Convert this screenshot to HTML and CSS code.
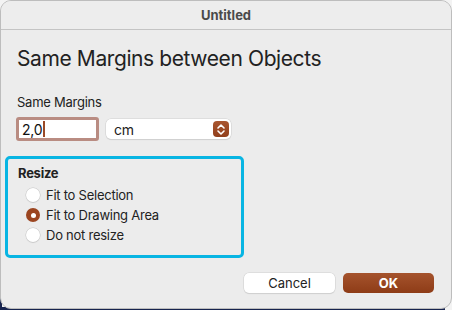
FILE: index.html
```html
<!DOCTYPE html>
<html>
<head>
<meta charset="utf-8">
<link rel="stylesheet" href="styles.css">
</head>
<body>
<div class="window">
  <div class="titlebar">Untitled</div>
  <div class="content">
    <h1 class="heading">Same Margins between Objects</h1>
    <div class="label">Same Margins</div>
    <div class="row">
      <div class="input"><span class="val">2,0</span><span class="caret"></span></div>
      <div class="select">
        <span>cm</span>
        <span class="stepper">
          <svg width="10" height="13" viewBox="0 0 10 13"><path d="M2 5 L5 2 L8 5 M2 8 L5 11 L8 8" fill="none" stroke="#fff" stroke-width="1.6" stroke-linecap="round" stroke-linejoin="round"/></svg>
        </span>
      </div>
    </div>
    <div class="group">
      <div class="group-title">Resize</div>
      <label class="radio"><span class="dot"></span>Fit to Selection</label>
      <label class="radio"><span class="dot on"></span>Fit to Drawing Area</label>
      <label class="radio"><span class="dot"></span>Do not resize</label>
    </div>
    <div class="buttons">
      <button class="btn">Cancel</button>
      <button class="btn primary">OK</button>
    </div>
  </div>
</div>
</body>
</html>
```
FILE: styles.css
```css
html, body { margin: 0; padding: 0; }
body {
  width: 452px; height: 310px; overflow: hidden;
  font-family: Inter, "Liberation Sans", sans-serif;
  letter-spacing: -0.25px;
  background:
    linear-gradient(#17244f, #17244f) 0 118px / 2px 192px no-repeat,
    linear-gradient(#17244f, #17244f) 0 307px / 445px 3px no-repeat,
    #f3f3f3;
}
.window {
  box-sizing: border-box;
  width: 452px; height: 309px;
  border: 1px solid #bdbdbd;
  border-radius: 11px;
  background: #ececec;
  overflow: hidden;
  display: flex; flex-direction: column;
}
.titlebar {
  height: 28px; flex: none;
  border-bottom: 1px solid #c4c4c4;
  background: #ededed;
  display: flex; align-items: center; justify-content: center;
  font-size: 13px; font-weight: 700; color: #4a4a4a;
  letter-spacing: 0;
}
.content { padding: 0 16px 0 16px; display: flex; flex-direction: column; }
.heading {
  margin: 15px 0 0 0;
  font-size: 21px; font-weight: 400; color: #222; line-height: 28px;
  letter-spacing: -0.4px;
}
.label { margin-top: 21px; font-size: 13px; color: #222; line-height: 16px; }
.row { display: flex; gap: 7px; margin-top: 7px; align-items: center; }
.input {
  box-sizing: border-box;
  width: 83px; height: 24px; margin-left: -1px;
  border: 3px solid #b98c82; border-radius: 3px;
  background: #fff;
  display: flex; align-items: center; padding-left: 3px;
  font-size: 14px; color: #111;
}
.caret { width: 2px; height: 16px; background: #9a4a28; margin-left: 1px; }
.select {
  box-sizing: border-box;
  width: 125px; height: 20px;
  background: #fff; border-radius: 5px;
  box-shadow: 0 0 0 0.5px #cfcfcf, 0 1px 1px rgba(0,0,0,0.12);
  display: flex; align-items: center; justify-content: space-between;
  padding: 0 2px 0 8px;
  font-size: 14px; color: #222;
}
.stepper {
  width: 16px; height: 16px; border-radius: 4px;
  background: linear-gradient(#a9552f, #913f1b);
  display: flex; align-items: center; justify-content: center;
}
.group {
  box-sizing: border-box;
  margin: 15px 0 0 -12px;
  width: 239px; height: 102px;
  border: 3px solid #08b5e3; border-radius: 5px;
  padding: 6px 0 0 10px;
}
.group-title { font-size: 13px; font-weight: 700; color: #222; line-height: 16px; }
.radio {
  display: flex; align-items: center;
  font-size: 13px; color: #222; height: 20px; line-height: 20px;
  margin-left: 8px;
}
.radio:first-of-type { margin-top: 4px; }
.dot {
  box-sizing: border-box;
  width: 14px; height: 14px; border-radius: 50%;
  background: #fff; margin-right: 6px;
  box-shadow: 0 0 0 0.5px #c4c4c4, 0 1px 1px rgba(0,0,0,0.1);
  display: flex; align-items: center; justify-content: center;
}
.dot.on { background: #9b4520; box-shadow: none; }
.dot.on::after { content: ""; width: 5px; height: 5px; border-radius: 50%; background: #fff; }
.buttons {
  display: flex; justify-content: flex-end; gap: 8px;
  margin-top: 15px; padding-right: 1px;
}
.btn {
  box-sizing: border-box;
  width: 91px; height: 20px;
  border: none; border-radius: 5px;
  background: #fff;
  box-shadow: 0 0 0 0.5px #cfcfcf, 0 1px 1px rgba(0,0,0,0.12);
  font-family: inherit; font-size: 13px; color: #222;
  letter-spacing: 0;
  padding: 0;
}
.btn.primary {
  background: linear-gradient(#a5532d, #8e3c17);
  color: #fff; font-weight: 700; box-shadow: none;
}
```
